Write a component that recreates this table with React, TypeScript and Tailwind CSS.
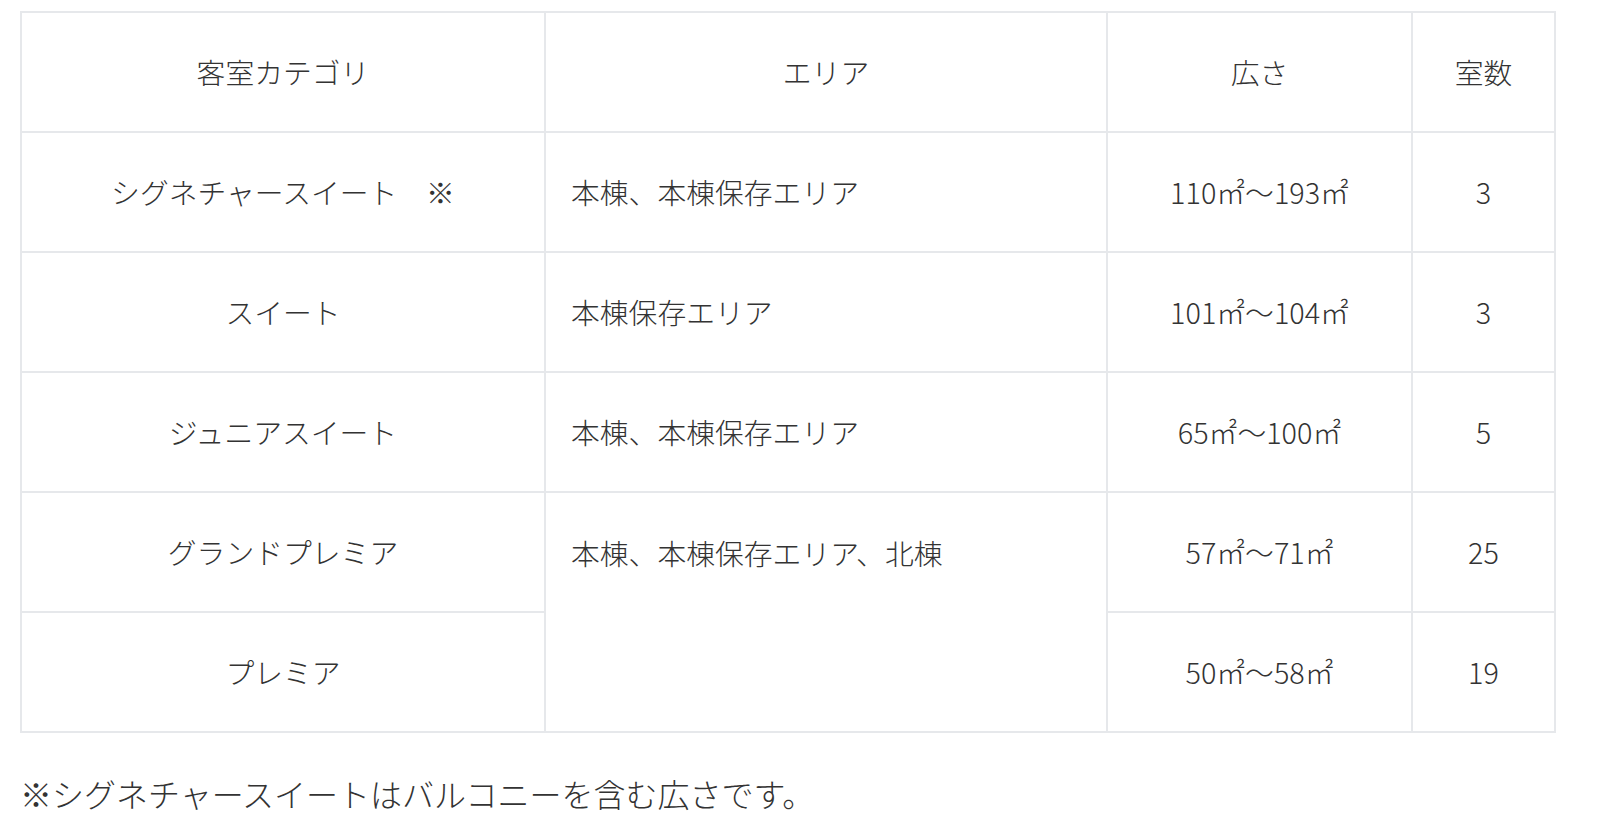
import React from "react";

const font = { fontFamily: '"Noto Sans CJK JP", "Noto Sans", sans-serif' };

const cell = "border-2 border-[#e6e8eb] h-[120px] align-middle";

export default function App() {
  return (
    <div className="bg-white min-h-[838px] w-[1605px] pt-[11px] pl-[20px] text-[#333] font-light" style={font}>
      <table className="table-fixed border-collapse w-[1534px] text-[28.8px] leading-[1.5]">
        <colgroup>
          <col className="w-[524px]" />
          <col className="w-[562px]" />
          <col className="w-[305px]" />
          <col className="w-[143px]" />
        </colgroup>
        <thead>
          <tr>
            <th className={`${cell} font-light text-center`}>客室カテゴリ</th>
            <th className={`${cell} font-light text-center`}>エリア</th>
            <th className={`${cell} font-light text-center`}>広さ</th>
            <th className={`${cell} font-light text-center`}>室数</th>
          </tr>
        </thead>
        <tbody>
          <tr>
            <td className={`${cell} text-center`}>シグネチャースイート　※</td>
            <td className={`${cell} px-[25px]`}>本棟、本棟保存エリア</td>
            <td className={`${cell} text-center`}>110㎡〜193㎡</td>
            <td className={`${cell} text-center`}>3</td>
          </tr>
          <tr>
            <td className={`${cell} text-center`}>スイート</td>
            <td className={`${cell} px-[25px]`}>本棟保存エリア</td>
            <td className={`${cell} text-center`}>101㎡〜104㎡</td>
            <td className={`${cell} text-center`}>3</td>
          </tr>
          <tr>
            <td className={`${cell} text-center`}>ジュニアスイート</td>
            <td className={`${cell} px-[25px]`}>本棟、本棟保存エリア</td>
            <td className={`${cell} text-center`}>65㎡〜100㎡</td>
            <td className={`${cell} text-center`}>5</td>
          </tr>
          <tr>
            <td className={`${cell} text-center`}>グランドプレミア</td>
            <td rowSpan={2} className="border-2 border-[#e6e8eb] align-top px-[25px] pt-[38px]">
              本棟、本棟保存エリア、北棟
            </td>
            <td className={`${cell} text-center`}>57㎡〜71㎡</td>
            <td className={`${cell} text-center`}>25</td>
          </tr>
          <tr>
            <td className={`${cell} text-center`}>プレミア</td>
            <td className={`${cell} text-center`}>50㎡〜58㎡</td>
            <td className={`${cell} text-center`}>19</td>
          </tr>
        </tbody>
      </table>
      <p className="mt-[36px] text-[32px] leading-[1.5]">※シグネチャースイートはバルコニーを含む広さです。</p>
    </div>
  );
}
